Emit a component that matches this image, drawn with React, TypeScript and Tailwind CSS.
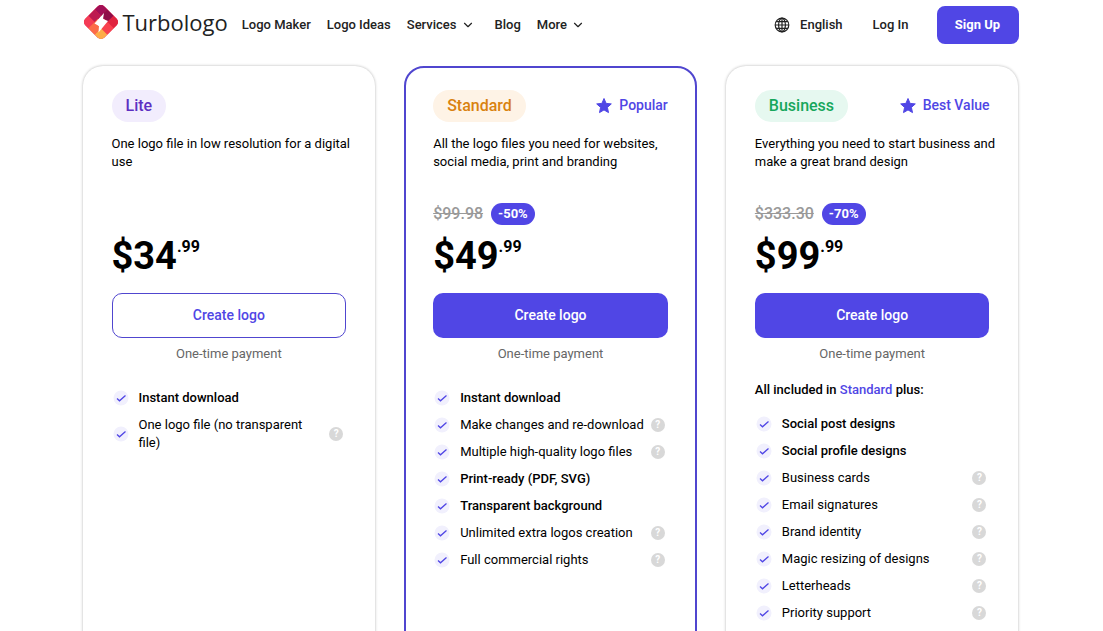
import { ChevronDown } from "lucide-react";

type Feature = {
  label: string;
  bold?: boolean;
  hint?: boolean;
};

type Plan = {
  name: string;
  pill: string;
  tag?: string;
  description: string;
  oldPrice?: string;
  discount?: string;
  price: string;
  card: string;
  button: string;
  extendsPlan?: string;
  features: Feature[];
};

const plainCard = "px-[29px] py-6 shadow-[0_0_3px_rgba(0,0,0,0.3)]";
const solidButton = "bg-[#5046e5] text-white";

const plans: Plan[] = [
  {
    name: "Lite",
    pill: "bg-[#f2edfd] text-[#5d2fc2]",
    description: "One logo file in low resolution for a digital use",
    price: "34",
    card: plainCard,
    button: "border border-[#5046cf] bg-white text-[#5046e5]",
    features: [
      { label: "Instant download", bold: true },
      { label: "One logo file (no transparent file)", hint: true },
    ],
  },
  {
    name: "Standard",
    pill: "bg-[#fef3e6] text-[#d9820f]",
    tag: "Popular",
    description:
      "All the logo files you need for websites, social media, print and branding",
    oldPrice: "$99.98",
    discount: "-50%",
    price: "49",
    card: "border-2 border-[#5046cf] px-[27px] py-[22px]",
    button: solidButton,
    features: [
      { label: "Instant download", bold: true },
      { label: "Make changes and re-download", hint: true },
      { label: "Multiple high-quality logo files", hint: true },
      { label: "Print-ready (PDF, SVG)", bold: true },
      { label: "Transparent background", bold: true },
      { label: "Unlimited extra logos creation", hint: true },
      { label: "Full commercial rights", hint: true },
    ],
  },
  {
    name: "Business",
    pill: "bg-[#e6f8f0] text-[#16a75c]",
    tag: "Best Value",
    description:
      "Everything you need to start business and make a great brand design",
    oldPrice: "$333.30",
    discount: "-70%",
    price: "99",
    card: plainCard,
    button: solidButton,
    extendsPlan: "Standard",
    features: [
      { label: "Social post designs", bold: true },
      { label: "Social profile designs", bold: true },
      { label: "Business cards", hint: true },
      { label: "Email signatures", hint: true },
      { label: "Brand identity", hint: true },
      { label: "Magic resizing of designs", hint: true },
      { label: "Letterheads", hint: true },
      { label: "Priority support", hint: true },
    ],
  },
];

const links = [
  { label: "Logo Maker", href: "#maker" },
  { label: "Logo Ideas", href: "#ideas" },
  { label: "Services", href: "#services", menu: true },
  { label: "Blog", href: "#blog" },
  { label: "More", href: "#more", menu: true },
];

const LogoMark = () => (
  <svg viewBox="0 0 36 36" className="size-9" aria-hidden="true">
    <defs>
      <clipPath id="mark">
        <rect x="4.5" y="4.5" width="27" height="27" rx="5" />
      </clipPath>
    </defs>
    <g transform="rotate(45 18 18)">
      <g clipPath="url(#mark)">
        <rect x="4" y="4" width="28" height="28" fill="#e8304e" />
        <rect x="4.5" y="4.5" width="9" height="9" fill="#a20f56" />
        <rect x="13.5" y="4.5" width="9" height="13" fill="#8f0d48" />
        <rect x="22.5" y="4.5" width="9" height="9" fill="#e0243f" />
        <rect x="4.5" y="13.5" width="13" height="9" fill="#bd1a50" />
        <rect x="18" y="13.5" width="13.5" height="9" fill="#f8414e" />
        <rect x="4.5" y="22.5" width="9" height="9" fill="#f43b55" />
        <rect x="13.5" y="18" width="9" height="13.5" fill="#fc6c48" />
        <rect x="22.5" y="22.5" width="9" height="9" fill="#fdac47" />
      </g>
    </g>
    <path d="M21 9L11.5 19.5l4.5 2.5-.5 6.5L25 17l-5-2z" fill="#fff" />
    <path d="M18 12.5l-5 6.5 5 5 5-6.5z" fill="#fff" />
  </svg>
);

const Globe = () => (
  <svg
    viewBox="0 0 16 16"
    className="size-4"
    fill="none"
    stroke="#222"
    strokeWidth="1.2"
    aria-hidden="true"
  >
    <circle cx="8" cy="8" r="6.8" />
    <ellipse cx="8" cy="8" rx="3.4" ry="6.8" />
    <path d="M8 1v14M1 8h14M2.2 4.6h11.6M2.2 11.4h11.6" />
  </svg>
);

const Star = () => (
  <svg viewBox="0 0 18 18" className="size-[18px]" aria-hidden="true">
    <path
      d="M9 2.5l2.1 4.9 5.2.5-3.9 3.5 1.1 5.2L9 13.9l-4.5 2.7 1.1-5.2L1.7 7.9l5.2-.5z"
      fill="#5046e5"
      stroke="#5046e5"
      strokeLinejoin="round"
    />
  </svg>
);

const Check = () => (
  <svg viewBox="0 0 16 16" className="size-4 shrink-0" aria-hidden="true">
    <circle cx="8" cy="8" r="7.5" fill="#f1f0fd" />
    <path
      d="M4 8.5l2.5 2.3 6-5.3"
      fill="none"
      stroke="#5046e5"
      strokeWidth="1.3"
    />
  </svg>
);

const Hint = () => (
  <button
    type="button"
    aria-label="More details"
    className="flex size-[14px] shrink-0 items-center justify-center rounded-full bg-[#d8d8d8] text-[10px] leading-none font-bold text-white"
  >
    ?
  </button>
);

const Header = () => (
  <header className="flex h-[50px] items-center justify-between">
    <div className="flex items-center">
      <a href="#home" className="flex items-center gap-1 pb-1.5">
        <LogoMark />
        <span className="font-['Open_Sans',sans-serif] text-[22px] leading-8 text-[#222]">
          Turbologo
        </span>
      </a>
      <nav className="ml-3.5 flex items-center gap-4 text-[13px] font-medium text-[#222]">
        {links.map((link) => (
          <a key={link.href} href={link.href} className="flex items-center">
            {link.label}
            {link.menu && <ChevronDown className="mx-1 size-3.5" />}
          </a>
        ))}
      </nav>
    </div>
    <div className="flex items-center text-[13px] font-medium text-[#222]">
      <button type="button" className="flex items-center gap-2.5">
        <Globe />
        English
      </button>
      <a href="#login" className="ml-[30px]">
        Log In
      </a>
      <button
        type="button"
        className="ml-7 h-[38px] w-[82px] rounded-lg bg-[#5046e5] font-bold text-white"
      >
        Sign Up
      </button>
    </div>
  </header>
);

const PlanCard = ({ plan }: { plan: Plan }) => (
  <section
    className={`flex min-h-[640px] flex-col rounded-[20px] bg-white ${plan.card}`}
  >
    <div className="flex items-center justify-between">
      <h2
        className={`rounded-full px-3.5 text-base leading-8 font-medium ${plan.pill}`}
      >
        {plan.name}
      </h2>
      {plan.tag && (
        <span className="flex items-center gap-1.5 pb-0.5 text-sm font-medium text-[#5046e5]">
          <Star />
          {plan.tag}
        </span>
      )}
    </div>
    <p className="mt-[13px] -mr-2 h-9 text-[13px] leading-[18px]">
      {plan.description}
    </p>
    <div className="mt-[31px] flex h-6 items-center gap-2">
      {plan.oldPrice && (
        <>
          <s className="text-base font-medium text-[#999]">{plan.oldPrice}</s>
          <span className="rounded-full bg-[#5046e5] px-[7px] text-[13px] leading-[22px] font-bold text-white">
            {plan.discount}
          </span>
        </>
      )}
    </div>
    <div className="flex h-[60px] text-[38px] leading-[60px] font-bold">
      ${plan.price}
      <span className="text-base leading-[42px]">.99</span>
    </div>
    <button
      type="button"
      className={`mt-[7px] h-[45px] rounded-[10px] pb-0.5 text-sm font-medium ${plan.button}`}
    >
      Create logo
    </button>
    <p className="mt-[7px] text-center text-[13px] leading-[18px] text-[#666]">
      One-time payment
    </p>
    {plan.extendsPlan && (
      <p className="mt-[18px] -mb-[10px] text-[13px] leading-[18px] font-medium">
        All included in{" "}
        <a href="#standard" className="text-[#5046e5]">
          {plan.extendsPlan}
        </a>{" "}
        plus:
      </p>
    )}
    <ul className="mt-[26px] flex flex-col gap-[9px] pr-[3px] pl-px text-[13px] leading-[18px]">
      {plan.features.map((feature) => (
        <li key={feature.label} className="flex items-center">
          <Check />
          <span
            className={`ml-2.5 min-w-0 flex-1 pr-1 ${feature.bold ? "font-medium" : ""}`}
          >
            {feature.label}
          </span>
          {feature.hint && <Hint />}
        </li>
      ))}
    </ul>
  </section>
);

const App = () => {
  return (
    <div className="bg-white pr-0.5 font-[Roboto,sans-serif] text-black">
      <div className="mx-auto max-w-[936px]">
        <Header />
        <main className="grid grid-cols-3 gap-[29px] pt-4 pb-10">
          {plans.map((plan) => (
            <PlanCard key={plan.name} plan={plan} />
          ))}
        </main>
      </div>
    </div>
  );
};

export default App;
